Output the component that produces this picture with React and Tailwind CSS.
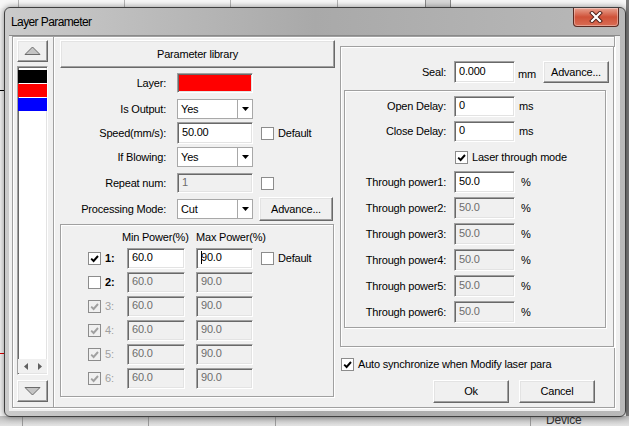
import React from 'react';

const SUNKEN = 'border border-t-[#a0a0a0] border-l-[#a0a0a0] border-r-white border-b-white shadow-[inset_1px_1px_0_#696969,inset_-1px_-1px_0_#e3e3e3]';
const RAISED = 'border border-t-white border-l-white border-r-[#696969] border-b-[#696969] shadow-[inset_-1px_-1px_0_#a0a0a0,inset_1px_1px_0_#e3e3e3] bg-[#f0f0f0]';
const ETCHED = 'border border-[#a0a0a0] shadow-[inset_1px_1px_0_#ffffff,1px_1px_0_#ffffff]';

function Check({ checked, disabled }) {
  return (
    <span className={`flex h-[13px] w-[13px] shrink-0 items-center justify-center border border-[#8c8c8c] ${disabled ? 'bg-[#f0f0f0]' : 'bg-white'}`}>
      {checked && (
        <svg width="9" height="9" viewBox="0 0 9 9">
          <path d="M1.2 4.6 L3.6 7 L8 2" fill="none" stroke={disabled ? '#a0a0a0' : '#000'} strokeWidth="1.9" />
        </svg>
      )}
    </span>
  );
}

function Field({ value, size, disabled, caret }) {
  return (
    <div className={`${SUNKEN} ${size} flex shrink-0 items-center pb-[2px] pl-[4px] ${disabled ? 'bg-[#f0f0f0] text-[#6d6d6d]' : 'bg-white'}`}>
      {caret && <span className="relative -mr-[1px] inline-block h-[13px] w-[1px] bg-black" />}
      {value}
    </div>
  );
}

function Combo({ value }) {
  return (
    <div className="flex h-[20px] w-[76px] shrink-0 items-stretch border border-[#a8a8a8] bg-white">
      <span className="flex flex-1 items-center pl-[3px]">{value}</span>
      <span className="flex w-[15px] items-center justify-center border-l border-[#a8a8a8]">
        <svg width="7" height="4" viewBox="0 0 7 4">
          <path d="M0 0H7L3.5 4Z" fill="#000" />
        </svg>
      </span>
    </div>
  );
}

function Button({ children, size }) {
  return <div className={`${RAISED} ${size} flex shrink-0 items-center justify-center`}>{children}</div>;
}

function Tri({ down }) {
  return (
    <svg width="17" height="10" viewBox="0 0 17 10">
      <path d={down ? 'M1 1.5 H16 L8.5 9 Z' : 'M1 8.5 H16 L8.5 1 Z'} fill="#c4c4c4" stroke="#6a6a6a" strokeWidth="1" />
    </svg>
  );
}

function Row({ label, children, rowClass }) {
  return (
    <div className={`flex items-center ${rowClass}`}>
      <span className="w-[106px] shrink-0 text-right">{label}</span>
      <div className="ml-[11px] flex items-center">{children}</div>
    </div>
  );
}

const powers = [
  { n: '1:', on: true, dis: false },
  { n: '2:', on: false, dis: false },
  { n: '3:', on: true, dis: true },
  { n: '4:', on: true, dis: true },
  { n: '5:', on: true, dis: true },
  { n: '6:', on: true, dis: true },
];

export default function App() {
  return (
    <div className="relative h-[426px] w-[629px] overflow-hidden bg-[#f3f3f3] font-['Liberation_Sans',Arial,sans-serif] text-[11px] tracking-[-0.2px] text-black">
      {/* desktop behind the dialog */}
      <div className="absolute left-0 top-0 h-[8px] w-[629px] bg-[#f7f7f7]" />
      <div className="absolute left-[18px] top-0 h-[8px] w-[1px] bg-[#b5b5b5]" />
      <div className="absolute left-[124px] top-0 h-[8px] w-[1px] bg-[#b5b5b5]" />
      <div className="absolute left-[230px] top-0 h-[8px] w-[1px] bg-[#b5b5b5]" />
      <div className="absolute left-[337px] top-0 h-[8px] w-[1px] bg-[#b5b5b5]" />
      <div className="absolute left-[425px] top-0 h-[8px] w-[26px] border-x border-[#8a8a8a] bg-[#d8d8d8]" />
      <div className="absolute left-0 top-[90px] h-[1px] w-[4px] bg-black" />
      <div className="absolute left-0 top-[353px] h-[1px] w-[4px] bg-[#e00000]" />
      <div className="absolute right-0 top-0 h-[426px] w-[3px] bg-[#7c7c7c]" />
      <div className="absolute bottom-0 left-0 h-[10px] w-[629px] bg-gradient-to-b from-[#bdbdbd] to-[#e3e3e3]" />
      <div className="absolute bottom-0 left-[22px] h-[10px] w-[1px] bg-[#9a9a9a]" />
      <div className="absolute bottom-0 left-[148px] h-[10px] w-[1px] bg-[#9a9a9a]" />
      <div className="absolute bottom-0 left-[275px] h-[10px] w-[1px] bg-[#9a9a9a]" />
      <div className="absolute bottom-0 left-[530px] h-[10px] w-[1px] bg-[#9a9a9a]" />
      <div className="absolute left-[546px] top-[413px] text-[12px] leading-[14px] text-[#333]">Device</div>

      {/* dialog window */}
      <div className="absolute left-[4px] top-[7px] flex h-[410px] w-[622px] flex-col rounded-[6px] border border-[#3f3f3f] bg-gradient-to-r from-[#cbcbcb] via-[#a9a9a9] to-[#b9b9b9] shadow-[0_0_6px_rgba(0,0,0,0.45)]">
        <div className="flex h-[27px] shrink-0 items-start justify-between">
          <span className="ml-[6px] mt-[7px] text-[12px] leading-[14px] tracking-[-0.6px]">Layer Parameter</span>
          <div className="mr-[6px] flex h-[19px] w-[46px] items-center justify-center rounded-b-[4px] border border-t-0 border-[#5b2a22] bg-gradient-to-b from-[#e7a08f] via-[#cf5138] to-[#d96d55] shadow-[inset_0_0_0_1px_rgba(255,255,255,0.35)]">
            <svg width="14" height="12" viewBox="0 0 14 12">
              <path d="M3 2 L11 10 M11 2 L3 10" stroke="#4a1d16" strokeWidth="4" strokeLinecap="square" />
              <path d="M3 2 L11 10 M11 2 L3 10" stroke="#ffffff" strokeWidth="2.2" strokeLinecap="square" />
            </svg>
          </div>
        </div>

        <div className="mb-[5px] ml-[4px] mr-[5px] flex-1 border-t border-[#8a8a8a] bg-[#f0f0f0]">
          <div className={`${ETCHED} ml-[3px] flex h-[372px] w-[603px] items-start pl-[4px] pt-[3px]`}>
            {/* layer list */}
            <div className="flex w-[31px] shrink-0 flex-col">
              <Button size="h-[22px] w-[31px]">
                <Tri />
              </Button>
              <div className={`${SUNKEN} mt-[4px] flex h-[309px] flex-col bg-white`}>
                <div className="mt-[3px] flex flex-col gap-[1px]">
                  <div className="h-[13px] bg-black" />
                  <div className="h-[13px] bg-[#ff0000]" />
                  <div className="h-[13px] bg-[#0000ff]" />
                </div>
                <div className="mt-auto mb-[1px] flex h-[14px] items-center gap-[10px] bg-[#f0f0f0] pl-[6px]">
                  <svg width="4" height="7" viewBox="0 0 4 7">
                    <path d="M4 0V7L0 3.5Z" fill="#606060" />
                  </svg>
                  <svg width="4" height="7" viewBox="0 0 4 7">
                    <path d="M0 0V7L4 3.5Z" fill="#606060" />
                  </svg>
                </div>
              </div>
              <div className="mt-[5px]">
                <Button size="h-[22px] w-[31px]">
                  <Tri down />
                </Button>
              </div>
            </div>

            <div className="-mt-[3px] ml-[5px] h-[370px] w-[2px] shrink-0 border-l border-r border-l-[#a0a0a0] border-r-white" />

            {/* layer parameters */}
            <div className="ml-[5px] flex w-[275px] shrink-0 flex-col">
              <Button size="h-[28px] w-[275px]">Parameter library</Button>
              <Row label="Layer:" rowClass="mt-[5px] h-[20px]">
                <div className={`${SUNKEN} h-[20px] w-[76px] bg-[#ff0000]`} />
              </Row>
              <Row label="Is Output:" rowClass="mt-[6px] h-[20px]">
                <Combo value="Yes" />
              </Row>
              <Row label="Speed(mm/s):" rowClass="mt-[3px] h-[22px]">
                <Field value="50.00" size="h-[22px] w-[76px]" />
                <span className="ml-[8px]">
                  <Check />
                </span>
                <span className="ml-[4px]">Default</span>
              </Row>
              <Row label="If Blowing:" rowClass="mt-[3px] h-[20px]">
                <Combo value="Yes" />
              </Row>
              <Row label="Repeat num:" rowClass="mt-[6px] h-[20px]">
                <Field value="1" size="h-[20px] w-[76px]" disabled />
                <span className="ml-[8px]">
                  <Check />
                </span>
              </Row>
              <Row label="Processing Mode:" rowClass="mt-[6px] h-[20px]">
                <Combo value="Cut" />
                <span className="ml-[6px]">
                  <Button size="h-[24px] w-[74px]">Advance...</Button>
                </span>
              </Row>

              <div className={`${ETCHED} mt-[5px] flex h-[173px] w-[274px] flex-col`}>
                <div className="flex pl-[61px] pt-[6px] leading-[13px]">
                  <span className="w-[74px]">Min Power(%)</span>
                  <span>Max Power(%)</span>
                </div>
                <div className="mt-[4px] flex flex-col gap-[3px]">
                  {powers.map((p, i) => (
                    <div key={p.n} className="flex h-[21px] items-center pl-[27px]">
                      <Check checked={p.on} disabled={p.dis} />
                      <span className={`ml-[4px] w-[22px] ${p.dis ? 'text-[#a0a0a0]' : 'font-bold'}`}>{p.n}</span>
                      <Field value="60.0" size="h-[21px] w-[58px]" disabled={i > 0} />
                      <span className="ml-[11px]">
                        <Field value="90.0" size="h-[21px] w-[57px]" disabled={i > 0} caret={i === 0} />
                      </span>
                      {i === 0 && (
                        <>
                          <span className="ml-[8px]">
                            <Check />
                          </span>
                          <span className="ml-[4px]">Default</span>
                        </>
                      )}
                    </div>
                  ))}
                </div>
              </div>
            </div>

            {/* laser parameters */}
            <div className="ml-[5px] flex w-[274px] shrink-0 flex-col">
              <div className={`${ETCHED} mt-[6px] h-[301px] w-[274px]`}>
                <div className="mt-[14px] flex h-[22px] items-center">
                  <span className="w-[105px] text-right">Seal:</span>
                  <Field value="0.000" size="ml-[8px] h-[22px] w-[61px]" />
                  <span className="ml-[3px] mt-[4px] w-[25px]">mm</span>
                  <Button size="h-[22px] w-[66px]">Advance...</Button>
                </div>
                <div className={`${ETCHED} ml-[3px] mt-[7px] flex h-[238px] w-[262px] flex-col`}>
                  <div className="mt-[5px] flex h-[21px] items-center">
                    <span className="w-[101px] text-right">Open Delay:</span>
                    <Field value="0" size="ml-[8px] h-[21px] w-[61px]" />
                    <span className="ml-[4px]">ms</span>
                  </div>
                  <div className="mt-[4px] flex h-[21px] items-center">
                    <span className="w-[101px] text-right">Close Delay:</span>
                    <Field value="0" size="ml-[8px] h-[21px] w-[61px]" />
                    <span className="ml-[4px]">ms</span>
                  </div>
                  <div className="mt-[9px] flex h-[13px] items-center pl-[110px]">
                    <Check checked />
                    <span className="ml-[4px]">Laser through mode</span>
                  </div>
                  <div className="mt-[7px] flex flex-col gap-[4px]">
                    {[1, 2, 3, 4, 5, 6].map((n) => (
                      <div key={n} className="flex h-[22px] items-center">
                        <span className="w-[101px] text-right">Through power{n}:</span>
                        <Field value="50.0" size="ml-[8px] h-[22px] w-[61px]" disabled={n > 1} />
                        <span className="ml-[6px]">%</span>
                      </div>
                    ))}
                  </div>
                </div>
              </div>

              <div className="mt-[11px] flex h-[13px] items-center pl-[1px]">
                <Check checked />
                <span className="ml-[4px]">Auto synchronize when Modify laser para</span>
              </div>
              <div className="mt-[9px] flex pl-[93px]">
                <Button size="h-[23px] w-[76px]">Ok</Button>
                <span className="ml-[10px]">
                  <Button size="h-[23px] w-[76px]">Cancel</Button>
                </span>
              </div>
            </div>
          </div>
        </div>
      </div>
    </div>
  );
}
